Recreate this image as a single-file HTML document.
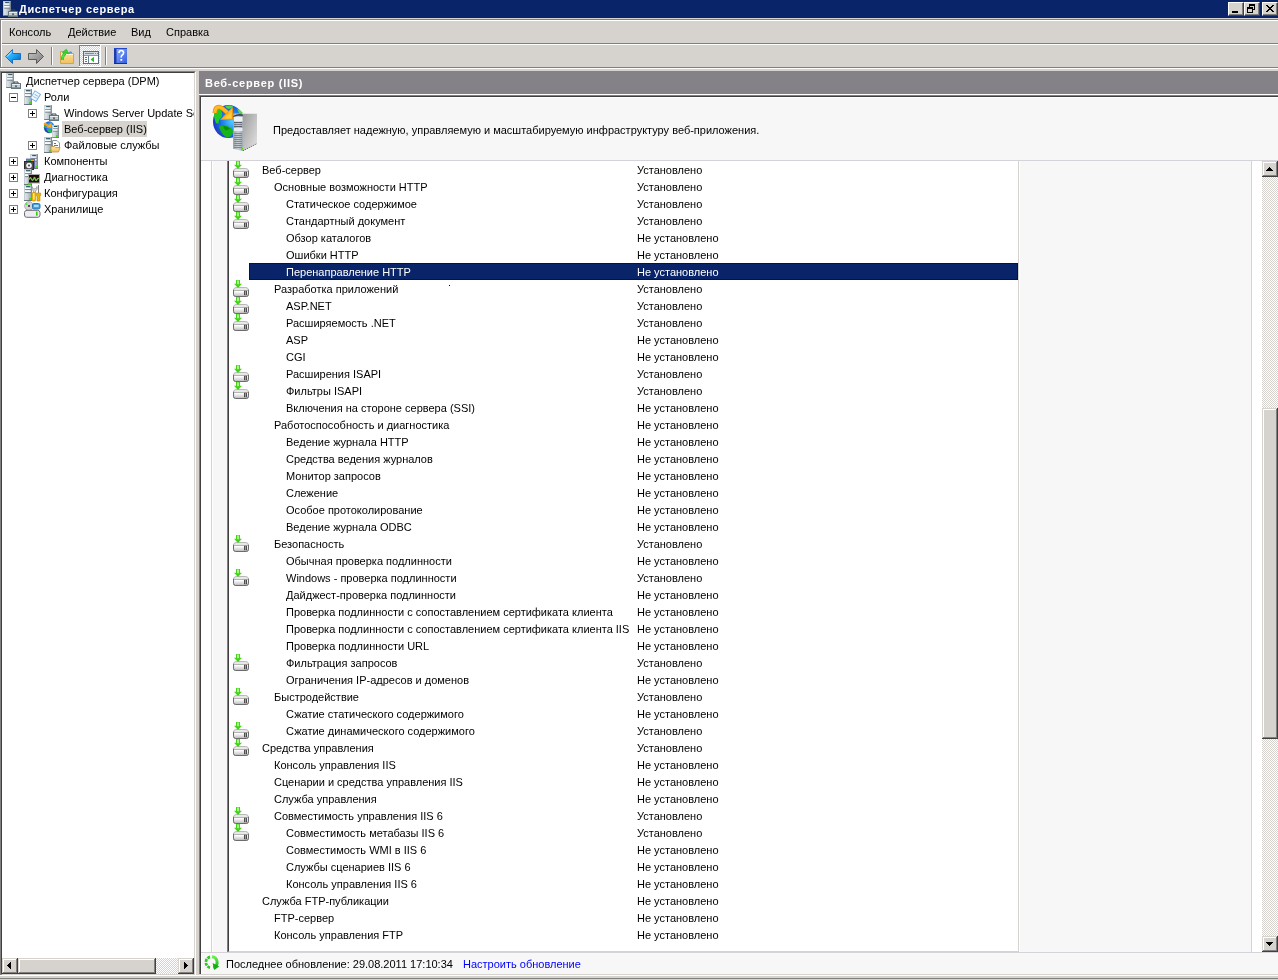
<!DOCTYPE html>
<html><head><meta charset="utf-8"><style>
*{margin:0;padding:0;box-sizing:border-box}
html,body{width:1278px;height:980px;overflow:hidden;background:#D6D3CE;font-family:"Liberation Sans",sans-serif;font-size:11px;color:#000}
.a{position:absolute}
.t{position:absolute;white-space:nowrap;line-height:13px;height:13px;will-change:transform}
.b{font-weight:bold}
svg.a{overflow:visible}
.ce{shape-rendering:crispEdges}
</style></head><body>
<svg width="0" height="0" style="position:absolute">
<defs>
<linearGradient id="gDrv" x1="0" x2="0" y1="0" y2="1"><stop offset="0" stop-color="#fbfbfb"/><stop offset="0.6" stop-color="#dedede"/><stop offset="1" stop-color="#bdbdbd"/></linearGradient>
<linearGradient id="gArrG" x1="0" x2="1" y1="0" y2="0"><stop offset="0" stop-color="#3fcf1c"/><stop offset="0.45" stop-color="#a6ff86"/><stop offset="1" stop-color="#3fcf1c"/></linearGradient>
<linearGradient id="gTow" x1="0" x2="1" y1="0" y2="0"><stop offset="0" stop-color="#e9eff2"/><stop offset="0.5" stop-color="#c4ced4"/><stop offset="1" stop-color="#8e9aa2"/></linearGradient>
<linearGradient id="gBox" x1="0" x2="0" y1="0" y2="1"><stop offset="0" stop-color="#c8d4da"/><stop offset="1" stop-color="#7d8c94"/></linearGradient>
<linearGradient id="gBack" x1="0" x2="1" y1="0" y2="1"><stop offset="0" stop-color="#6fd0ff"/><stop offset="0.5" stop-color="#1ea6f5"/><stop offset="1" stop-color="#0058b8"/></linearGradient>
<linearGradient id="gFwd" x1="0" x2="1" y1="0" y2="1"><stop offset="0" stop-color="#c8c8c8"/><stop offset="1" stop-color="#7c7c7c"/></linearGradient>
<linearGradient id="gFold" x1="0" x2="0" y1="0" y2="1"><stop offset="0" stop-color="#ffe6a0"/><stop offset="1" stop-color="#f0c060"/></linearGradient>
<linearGradient id="gHelp" x1="0" x2="1" y1="0" y2="1"><stop offset="0" stop-color="#98b4ff"/><stop offset="1" stop-color="#2d5ae0"/></linearGradient>
<radialGradient id="gGlobe" cx="0.6" cy="0.4" r="0.7"><stop offset="0" stop-color="#5fd8ff"/><stop offset="0.55" stop-color="#1e6fe6"/><stop offset="1" stop-color="#0a1e9a"/></radialGradient>
<linearGradient id="gSrvF" x1="0" x2="1" y1="0" y2="0"><stop offset="0" stop-color="#9aa0a6"/><stop offset="0.5" stop-color="#e4e6e8"/><stop offset="1" stop-color="#b0b4b8"/></linearGradient>
<linearGradient id="gSrvS" x1="0" x2="1" y1="0" y2="1"><stop offset="0" stop-color="#f2f2f2"/><stop offset="1" stop-color="#c4c4c4"/></linearGradient>
<linearGradient id="gRef" x1="0" x2="0" y1="0" y2="1"><stop offset="0" stop-color="#6cf050"/><stop offset="1" stop-color="#10b010"/></linearGradient>
<pattern id="chk" width="2" height="2" patternUnits="userSpaceOnUse"><rect width="2" height="2" fill="#D6D3CE"/><rect width="1" height="1" fill="#fff"/><rect x="1" y="1" width="1" height="1" fill="#fff"/></pattern>
<symbol id="drv" viewBox="0 0 16 17">
<path d="M0.5 10 Q0.9 7.5 3.2 7.5 H12.8 Q15.1 7.5 15.5 10 V14.3 Q15.5 16.5 13.3 16.5 H2.7 Q0.5 16.5 0.5 14.3 Z" fill="#e8e8e8" stroke="#b8b8b8"/>
<rect x="1" y="11" width="14" height="5" fill="url(#gDrv)"/>
<path d="M0.5 9.8 V14.3 Q0.5 16.5 2.7 16.5 H13.3 Q15.5 16.5 15.5 14.3 V9.8" fill="none" stroke="#6c6c6c"/>
<rect x="1" y="10" width="14" height="0.8" fill="#a8a8a8"/>
<rect x="2" y="11" width="8.5" height="1.2" fill="#ffffff"/>
<rect x="11" y="10.8" width="3" height="4.4" fill="#4c4c4c"/>
<rect x="12" y="11.2" width="1" height="3.6" fill="#44f00c"/>
<path d="M3 0 H7 V3.8 H9 L5 7.9 L1 3.8 H3 Z" fill="#45d21a"/>
<rect x="4.1" y="0.4" width="1.8" height="3.8" fill="#b0ff90"/>
</symbol>
<symbol id="tow" viewBox="0 0 8 16">
<rect x="0" y="0" width="8" height="16" fill="url(#gTow)"/>
<rect x="0" y="0" width="8" height="1" fill="#b8c2c8"/><rect x="0" y="0" width="1" height="16" fill="#c4ccd0"/><rect x="7" y="0" width="1" height="16" fill="#7e8a92"/>
<rect x="2" y="1.2" width="4" height="1.3" fill="#1b4d5a"/>
<rect x="1" y="2.5" width="5.6" height="1.6" fill="#f6fcff"/>
<rect x="1" y="4.2" width="6" height="0.9" fill="#6e7a82"/>
<rect x="1" y="5.2" width="5.6" height="1.8" fill="#f6fcff"/>
<rect x="1" y="7.2" width="6" height="0.9" fill="#6e7a82"/>
<rect x="0" y="15" width="8" height="1" fill="#6a767e"/>
</symbol>
<symbol id="led" viewBox="0 0 2 2"><rect width="2" height="2" fill="#3fe018"/></symbol>
<symbol id="tbox" viewBox="0 0 10 8">
<path d="M3 2.5 V1 H7 V2.5" fill="none" stroke="#3a4448" stroke-width="1"/>
<rect x="0.5" y="2.5" width="9" height="5" fill="url(#gBox)" stroke="#66747c"/>
<rect x="1" y="3" width="8" height="1.2" fill="#e8f0f4"/>
<rect x="4.5" y="4.2" width="1" height="2" fill="#2c3438"/>
<rect x="1" y="5" width="3" height="1" fill="#c8d4d8"/>
<rect x="6" y="5" width="3" height="1" fill="#c8d4d8"/>
</symbol>
<symbol id="smgr" viewBox="0 0 16 16">
<use href="#tow" x="0" y="0" width="8" height="15"/>
<use href="#tbox" x="5" y="8" width="10" height="8"/>
</symbol>
</defs></svg>

<div class="a" style="left:0;top:0;width:1278px;height:18px;background:#0A246A"></div>
<svg class="a" style="left:3px;top:1px" width="16" height="16"><use href="#smgr" width="16" height="16"/></svg>
<div class="t b" style="left:19px;top:3px;color:#fff;letter-spacing:0.6px">Диспетчер сервера</div>
<div class="a" style="left:1228px;top:2px;width:16px;height:14px;background:#D6D3CE;border-top:1px solid #fff;border-left:1px solid #fff;border-right:1px solid #404040;border-bottom:1px solid #404040;box-shadow:inset -1px -1px 0 #808080"></div>
<div class="a" style="left:1244px;top:2px;width:16px;height:14px;background:#D6D3CE;border-top:1px solid #fff;border-left:1px solid #fff;border-right:1px solid #404040;border-bottom:1px solid #404040;box-shadow:inset -1px -1px 0 #808080"></div>
<div class="a" style="left:1262px;top:2px;width:16px;height:14px;background:#D6D3CE;border-top:1px solid #fff;border-left:1px solid #fff;border-right:1px solid #404040;border-bottom:1px solid #404040;box-shadow:inset -1px -1px 0 #808080"></div>
<svg class="a ce" style="left:1228px;top:0" width="50" height="18"><rect x="4" y="11" width="6" height="2" fill="#000"/><rect x="21" y="4" width="6" height="2" fill="#000"/><rect x="26" y="6" width="1" height="4" fill="#000"/><rect x="24" y="9" width="2" height="1" fill="#000"/><rect x="21" y="6" width="1" height="1" fill="#000"/><rect x="19" y="7" width="6" height="2" fill="#000"/><rect x="19" y="9" width="1" height="4" fill="#000"/><rect x="24" y="9" width="1" height="4" fill="#000"/><rect x="19" y="12" width="6" height="1" fill="#000"/></svg>
<svg class="a ce" style="left:1262px;top:2px" width="16" height="14"><rect x="4" y="3" width="2" height="1" fill="#000"/><rect x="10" y="3" width="2" height="1" fill="#000"/><rect x="5" y="4" width="2" height="1" fill="#000"/><rect x="9" y="4" width="2" height="1" fill="#000"/><rect x="6" y="5" width="2" height="1" fill="#000"/><rect x="8" y="5" width="2" height="1" fill="#000"/><rect x="7" y="6" width="2" height="1" fill="#000"/><rect x="7" y="6" width="2" height="1" fill="#000"/><rect x="8" y="7" width="2" height="1" fill="#000"/><rect x="6" y="7" width="2" height="1" fill="#000"/><rect x="9" y="8" width="2" height="1" fill="#000"/><rect x="5" y="8" width="2" height="1" fill="#000"/><rect x="10" y="9" width="2" height="1" fill="#000"/><rect x="4" y="9" width="2" height="1" fill="#000"/></svg>
<div class="a" style="left:0;top:19px;width:1278px;height:1px;background:#808080"></div>
<div class="a" style="left:1px;top:20px;width:1277px;height:1px;background:#fff"></div>
<div class="a" style="left:0;top:19px;width:1px;height:49px;background:#808080"></div>
<div class="a" style="left:1px;top:20px;width:1px;height:47px;background:#fff"></div>
<div class="t" style="left:9px;top:26px">Консоль</div>
<div class="t" style="left:68px;top:26px">Действие</div>
<div class="t" style="left:131px;top:26px">Вид</div>
<div class="t" style="left:166px;top:26px">Справка</div>
<div class="a" style="left:2px;top:43px;width:1276px;height:1px;background:#808080"></div>
<div class="a" style="left:2px;top:44px;width:1276px;height:1px;background:#fff"></div>
<div class="a" style="left:0;top:67px;width:1278px;height:1px;background:#808080"></div>
<div class="a" style="left:0;top:68px;width:1278px;height:1px;background:#fff"></div>
<svg class="a" style="left:0;top:44px" width="140" height="24"><path d="M5.5 12.5 L12.5 5.5 V9.5 H20.5 V15.5 H12.5 V19.5 Z" fill="url(#gBack)" stroke="#1470c8" stroke-width="1" stroke-linejoin="miter"/><path d="M7 12.5 L12 7.5" stroke="#b8ecff" stroke-width="1"/><path d="M43.5 12.5 L36.5 5.5 V9.5 H28.5 V15.5 H36.5 V19.5 Z" fill="url(#gFwd)" stroke="#5a5a5a" stroke-width="1"/><rect x="51" y="3" width="1" height="18" fill="#808080"/><rect x="52" y="3" width="1" height="18" fill="#fff"/><path d="M60.5 19.5 V7.5 H65.5 L66.5 9.5 H73.5 V19.5 Z" fill="url(#gFold)" stroke="#d2a64e"/><rect x="61" y="10" width="12" height="1" fill="#fff4cc"/><path d="M62.3 15.8 Q62.6 11.5 65.2 9.2" fill="none" stroke="#1fa81f" stroke-width="2.8"/><path d="M62.3 15.8 Q62.6 11.5 65.2 9.2" fill="none" stroke="#4ee640" stroke-width="1.6"/><path d="M62.4 8.6 L66.3 5.2 L68.9 9.6 Z" fill="#3cd630" stroke="#1fa81f" stroke-width="0.6"/><ellipse cx="70.5" cy="8.4" rx="1.5" ry="0.9" fill="#4a8ee8"/><rect x="79" y="1" width="22" height="22" fill="url(#chk)"/><rect x="79" y="1" width="22" height="1" fill="#808080"/><rect x="79" y="1" width="1" height="22" fill="#808080"/><rect x="79" y="22" width="22" height="1" fill="#fff"/><rect x="100" y="1" width="1" height="22" fill="#fff"/><g class="ce"><rect x="83" y="7" width="16" height="13" fill="#5c6c80"/><rect x="84" y="8" width="14" height="11" fill="#fff"/><rect x="84" y="8" width="14" height="3" fill="#d2dae2"/><rect x="85" y="9" width="9" height="1" fill="#7a8a9c"/><rect x="95" y="9" width="1" height="1" fill="#7a8a9c"/><rect x="97" y="9" width="1" height="1" fill="#7a8a9c"/><rect x="84" y="11" width="14" height="1" fill="#8a98a8"/><rect x="88" y="12" width="1" height="7" fill="#6c7c8c"/><rect x="85" y="13" width="2" height="1" fill="#3a7ad0"/><rect x="85" y="15" width="2" height="1" fill="#3a7ad0"/><rect x="85" y="17" width="2" height="1" fill="#3a7ad0"/></g><path d="M90.6 15.5 L94 12.8 V18.2 Z" fill="#2eb82e"/><rect x="105" y="3" width="1" height="18" fill="#808080"/><rect x="106" y="3" width="1" height="18" fill="#fff"/><rect x="114" y="4" width="13" height="16" fill="url(#gHelp)"/><rect x="114" y="4" width="2.5" height="16" fill="#1a3cb0"/><rect x="114" y="4" width="13" height="1" fill="#2048c8"/><rect x="114" y="19" width="13" height="1" fill="#1a2c90"/><path d="M119 9 Q119 6.5 121.3 6.5 Q123.6 6.5 123.6 8.8 Q123.6 10.2 122 11.2 Q121.2 11.8 121.2 13.5" fill="none" stroke="#fff" stroke-width="1.6"/><rect x="120.4" y="15" width="1.8" height="1.8" fill="#fff"/></svg>
<div class="a" style="left:0;top:71px;width:196px;height:905px;background:#fff;border-top:1px solid #808080;border-left:1px solid #808080;border-right:1px solid #fff;border-bottom:1px solid #fff;"><div style="position:absolute;left:0;top:0;right:0;bottom:0;border-top:1px solid #404040;border-left:1px solid #404040;border-right:1px solid #D6D3CE;border-bottom:1px solid #D6D3CE"></div></div>
<div class="a" style="left:2px;top:73px;width:192px;height:884px;overflow:hidden">
<div class="t" style="left:24px;top:2px">Диспетчер сервера (DPM)</div>
<div class="t" style="left:42px;top:18px">Роли</div>
<div class="a" style="left:7px;top:20px;width:9px;height:9px;border:1px solid #808080;background:#fff"></div>
<div class="a" style="left:9px;top:24px;width:5px;height:1px;background:#000"></div>
<div class="t" style="left:62px;top:34px">Windows Server Update Services</div>
<div class="a" style="left:26px;top:36px;width:9px;height:9px;border:1px solid #808080;background:#fff"></div>
<div class="a" style="left:28px;top:40px;width:5px;height:1px;background:#000"></div>
<div class="a" style="left:30px;top:38px;width:1px;height:5px;background:#000"></div>
<div class="a" style="left:60px;top:48px;width:85px;height:16px;background:#D6D3CE"></div>
<div class="t" style="left:62px;top:50px">Веб-сервер (IIS)</div>
<div class="t" style="left:62px;top:66px">Файловые службы</div>
<div class="a" style="left:26px;top:68px;width:9px;height:9px;border:1px solid #808080;background:#fff"></div>
<div class="a" style="left:28px;top:72px;width:5px;height:1px;background:#000"></div>
<div class="a" style="left:30px;top:70px;width:1px;height:5px;background:#000"></div>
<div class="t" style="left:42px;top:82px">Компоненты</div>
<div class="a" style="left:7px;top:84px;width:9px;height:9px;border:1px solid #808080;background:#fff"></div>
<div class="a" style="left:9px;top:88px;width:5px;height:1px;background:#000"></div>
<div class="a" style="left:11px;top:86px;width:1px;height:5px;background:#000"></div>
<div class="t" style="left:42px;top:98px">Диагностика</div>
<div class="a" style="left:7px;top:100px;width:9px;height:9px;border:1px solid #808080;background:#fff"></div>
<div class="a" style="left:9px;top:104px;width:5px;height:1px;background:#000"></div>
<div class="a" style="left:11px;top:102px;width:1px;height:5px;background:#000"></div>
<div class="t" style="left:42px;top:114px">Конфигурация</div>
<div class="a" style="left:7px;top:116px;width:9px;height:9px;border:1px solid #808080;background:#fff"></div>
<div class="a" style="left:9px;top:120px;width:5px;height:1px;background:#000"></div>
<div class="a" style="left:11px;top:118px;width:1px;height:5px;background:#000"></div>
<div class="t" style="left:42px;top:130px">Хранилище</div>
<div class="a" style="left:7px;top:132px;width:9px;height:9px;border:1px solid #808080;background:#fff"></div>
<div class="a" style="left:9px;top:136px;width:5px;height:1px;background:#000"></div>
<div class="a" style="left:11px;top:134px;width:1px;height:5px;background:#000"></div>
<svg class="a" style="left:4px;top:0px" width="20" height="17"><use href="#smgr" width="16" height="16"/></svg>
<svg class="a" style="left:22px;top:16px" width="20" height="17"><use href="#tow" width="8" height="16"/><rect x="5" y="13" width="2" height="2" fill="#3fe018"/><g transform="translate(0.5 1.8) rotate(32 11.5 6)"><rect x="7.5" y="1.5" width="6.5" height="8.5" fill="#f4faff" stroke="#7ab4e8"/><rect x="9" y="4" width="4" height="1" fill="#9ab8e0"/><rect x="9" y="6.5" width="4" height="1" fill="#9ab8e0"/></g></svg>
<svg class="a" style="left:42px;top:32px" width="20" height="17"><use href="#smgr" width="16" height="16"/></svg>
<svg class="a" style="left:41px;top:48px" width="20" height="17"><ellipse cx="6.2" cy="6.3" rx="5.3" ry="6" fill="url(#gGlobe)"/><path d="M3.5 8 Q6 7.5 9 10 L7.5 12 Q4.5 11 3.5 8Z" fill="#22c83a"/><path d="M1.2 4 Q1 6 2 7.5 L3 6 Z" fill="#30d040"/><path d="M1.2 2.2 L5.5 5.2" stroke="#f8a010" stroke-width="2.6"/><path d="M8.3 1.8 V6.6 H3.5 Z" fill="#ffb020" stroke="#f09000" stroke-width="0.5"/><use href="#tow" x="9" y="4" width="7" height="13"/><rect x="13" y="14" width="2" height="2" fill="#3fe018"/></svg>
<svg class="a" style="left:42px;top:64px" width="20" height="17"><use href="#tow" width="8" height="16"/><rect x="5" y="13" width="2" height="2" fill="#3fe018"/><path d="M8.5 3.5 H13 L15.5 6 V11.5 H8.5 Z" fill="#fff" stroke="#8a949a"/><rect x="10" y="6" width="2" height="1" fill="#3a78d0"/><rect x="10" y="8" width="4" height="1" fill="#3a78d0"/><path d="M7 9.5 H10.5 L11.5 10.5 H16 L14.5 15 H7 Z" fill="url(#gFold)" stroke="#c09040" stroke-width="0.8"/></svg>
<svg class="a" style="left:22px;top:80px" width="20" height="17"><use href="#tow" x="6" y="1" width="8" height="15"/><rect x="11" y="13" width="2" height="2" fill="#3fe018"/><rect x="2.5" y="6" width="8" height="9" fill="#7c80c0" stroke="#5a5ea8" stroke-width="0.8"/><rect x="4" y="7" width="3" height="1" fill="#3a9a50"/><rect x="7" y="7" width="3" height="1" fill="#f0b020"/><rect x="0.5" y="8.5" width="9" height="8" fill="#505050" stroke="#2a2a2a"/><circle cx="5" cy="12.5" r="2.8" fill="#f0f0ff"/><circle cx="5" cy="12.5" r="0.9" fill="#303030"/></svg>
<svg class="a" style="left:22px;top:96px" width="20" height="17"><use href="#tow" width="8" height="16"/><rect x="4.5" y="5.5" width="11" height="8.5" fill="#1c0c0c" stroke="#a8acb0"/><path d="M5.2 10.5 Q6.3 7 7.4 10 Q8.6 12.8 9.8 9.5 Q10.6 6.8 11.4 10.6 Q12.4 12.5 13.4 10 Q14.2 8.8 15 10" fill="none" stroke="#78c848" stroke-width="1.3"/><rect x="4" y="14.2" width="3" height="1.6" fill="#3fe018"/></svg>
<svg class="a" style="left:22px;top:112px" width="20" height="17"><use href="#tow" width="8" height="16"/><rect x="5" y="13" width="2" height="2" fill="#3fe018"/><path d="M8 1.5 Q7 4.5 9.5 6 L9.5 7.5 L11.5 7.5 L11.5 6 Q14 4.5 13 1.5 L11.8 3.8 L9.2 3.8 Z" fill="#d8d8d8" stroke="#909090" stroke-width="0.7"/><rect x="8" y="7.5" width="3.6" height="8.5" rx="1" fill="#f2c000" stroke="#c89000" stroke-width="0.7"/><rect x="9.2" y="8.5" width="1.2" height="6" fill="#fff6a0"/><rect x="14" y="0" width="1" height="8" fill="#808080"/><path d="M12.3 8 H16.7 V10.5 H16 V16 H13 V10.5 H12.3 Z" fill="#f0b400" stroke="#c08800" stroke-width="0.6"/></svg>
<svg class="a" style="left:22px;top:128px" width="20" height="17"><circle cx="5" cy="5" r="4.4" fill="#d4d4d8" stroke="#9a9aa0" stroke-width="0.7"/><circle cx="5" cy="5" r="1.1" fill="#303030"/><path d="M1.2 4 Q1.5 2 3 1.3 L3.5 4 Z" fill="#60e040"/><rect x="8.5" y="2.5" width="7.5" height="5.5" rx="1.5" fill="#48a4e0" stroke="#2a74b4"/><rect x="10" y="4" width="4.5" height="2" fill="#a8dcf8"/><path d="M0.5 11.5 Q0.8 9.3 3 9.3 H13.5 Q15.7 9.3 16 11.5 V14 Q16 16.3 13.8 16.3 H2.7 Q0.5 16.3 0.5 14 Z" fill="#ececf2" stroke="#6c6c70"/><rect x="12" y="10.5" width="1.6" height="4.2" fill="#30d010"/></svg>
</div>
<svg class="a ce" style="left:2px;top:958px" width="192" height="16"><rect width="192" height="16" fill="url(#chk)"/><rect x="0" y="0" width="16" height="16" fill="#404040"/><rect x="0" y="0" width="15" height="15" fill="#D6D3CE"/><rect x="1" y="1" width="14" height="14" fill="#808080"/><rect x="1" y="1" width="13" height="13" fill="#fff"/><rect x="2" y="2" width="12" height="12" fill="#D6D3CE"/><rect x="5" y="7" width="1" height="1" fill="#000"/><rect x="6" y="6" width="1" height="3" fill="#000"/><rect x="7" y="5" width="1" height="5" fill="#000"/><rect x="8" y="4" width="1" height="7" fill="#000"/><rect x="16" y="0" width="138" height="16" fill="#404040"/><rect x="16" y="0" width="137" height="15" fill="#D6D3CE"/><rect x="17" y="1" width="136" height="14" fill="#808080"/><rect x="17" y="1" width="135" height="13" fill="#fff"/><rect x="18" y="2" width="134" height="12" fill="#D6D3CE"/><rect x="176" y="0" width="16" height="16" fill="#404040"/><rect x="176" y="0" width="15" height="15" fill="#D6D3CE"/><rect x="177" y="1" width="14" height="14" fill="#808080"/><rect x="177" y="1" width="13" height="13" fill="#fff"/><rect x="178" y="2" width="12" height="12" fill="#D6D3CE"/><rect x="182" y="4" width="1" height="7" fill="#000"/><rect x="183" y="5" width="1" height="5" fill="#000"/><rect x="184" y="6" width="1" height="3" fill="#000"/><rect x="185" y="7" width="1" height="1" fill="#000"/></svg>
<div class="a" style="left:199px;top:71px;width:1079px;height:23px;background:#848286"></div>
<div class="t b" style="left:205px;top:77px;color:#fff;letter-spacing:0.72px">Веб-сервер (IIS)</div>
<div class="a" style="left:199px;top:94px;width:1079px;height:1px;background:#fff"></div>
<div class="a" style="left:199px;top:95px;width:1079px;height:880px;background:#F7F7F7;border-top:1px solid #808080;border-left:1px solid #808080"><div style="position:absolute;left:0;top:0;right:0;bottom:0;border-top:1px solid #404040;border-left:1px solid #404040"></div></div>
<div class="a" style="left:201px;top:97px;width:1077px;height:1px;background:#fff"></div>
<div class="a" style="left:201px;top:97px;width:1px;height:63px;background:#fff"></div>
<svg class="a" style="left:206px;top:100px" width="56" height="56"><defs><linearGradient id="gSide" x1="0" y1="0" x2="1" y2="1"><stop offset="0" stop-color="#9c9c9c"/><stop offset="0.55" stop-color="#c4c4c4"/><stop offset="1" stop-color="#e4e4e4"/></linearGradient><linearGradient id="gFront" x1="0" y1="0" x2="1" y2="0"><stop offset="0" stop-color="#9aa2aa"/><stop offset="0.5" stop-color="#c8d0d6"/><stop offset="1" stop-color="#a0a8b0"/></linearGradient><radialGradient id="gGl2" cx="0.62" cy="0.5" r="0.75"><stop offset="0" stop-color="#4fd0ff"/><stop offset="0.45" stop-color="#1e78e8"/><stop offset="0.85" stop-color="#1a30c0"/><stop offset="1" stop-color="#101c90"/></radialGradient></defs><ellipse cx="22.5" cy="21.5" rx="15.5" ry="16.5" fill="url(#gGl2)"/><path d="M8 10 Q11 8 15 10 Q17 14 15.5 17 Q13 19 12.5 23 Q11 25 9.5 22 Q7.5 17 8 10 Z" fill="#22cc22"/><path d="M13 26.5 Q18 24.5 23 27 Q27 28.5 27 32 Q26 37 21 37.5 Q15.5 35 13 26.5 Z" fill="#18b418"/><path d="M17 25.5 Q21 26 24 28.5 Q22 31 19 30 Z" fill="#0a9010"/><path d="M19 6 Q23 4.8 27 6 Q26 8.5 23 9 Q20 8.5 19 6 Z" fill="#4cd848"/><path d="M31 9 Q35 10 37 13 L33 13 Z" fill="#5ad850"/><path d="M8.8 13 Q9 7 13 7 Q15.5 7 22.5 13.8" fill="none" stroke="#f09000" stroke-width="4.6"/><path d="M8.8 13 Q9 7 13 7 Q15.5 7 22.5 13.8" fill="none" stroke="#ffb828" stroke-width="3"/><path d="M26.5 7.5 L26.5 19.5 L14.8 19.5 Z" fill="#ffb420" stroke="#f09000" stroke-width="0.9" stroke-linejoin="round"/><path d="M18.5 18.5 L25.5 11.5 V18.5 Z" fill="#ffcc40"/><path d="M37 13.8 L51 13.8 L51 43.8 L37 51 Z" fill="url(#gSide)"/><path d="M37 50.8 L51 43.6" stroke="#505050" stroke-width="0.8" stroke-dasharray="1.2 1"/><path d="M27 13.5 H37 V51 L27 48.7 Z" fill="url(#gFront)"/><path d="M27.2 16 Q32 13.2 36.8 14.5 V16 Q32 15 27.2 17 Z" fill="#3a3e44"/><rect x="28" y="17" width="8.5" height="4.5" fill="#eef2f6"/><rect x="28" y="22" width="8" height="1" fill="#5a6068"/><rect x="28" y="24" width="8" height="1" fill="#7a8088"/><rect x="28" y="26" width="8" height="1" fill="#5a6068"/><rect x="28" y="28" width="8.5" height="3" fill="#e8ecf0"/><rect x="28" y="33" width="8" height="1" fill="#80888f"/><rect x="28" y="35" width="8" height="1" fill="#80888f"/><rect x="28" y="37" width="8" height="1" fill="#80888f"/><rect x="28" y="39" width="8" height="1" fill="#80888f"/><rect x="28" y="41" width="8" height="1" fill="#80888f"/><rect x="28" y="43" width="8" height="1" fill="#80888f"/><rect x="28" y="45" width="8" height="1" fill="#80888f"/><rect x="28" y="47" width="8" height="1" fill="#80888f"/><rect x="35" y="48" width="2.2" height="2.2" fill="#58e020"/></svg>
<div class="t" style="left:273px;top:124px">Предоставляет надежную, управляемую и масштабируемую инфраструктуру веб-приложения.</div>
<div class="a" style="left:201px;top:160px;width:1077px;height:1px;background:#D5D3D8"></div>
<div class="a" style="left:201px;top:161px;width:1061px;height:791px;background:#fff;overflow:hidden">
<div class="a" style="left:10px;top:0;width:1px;height:791px;background:#D5D3D8"></div>
<div class="a" style="left:11px;top:0;width:1040px;height:791px;background:#F7F7F7;border-left:1px solid #fff;border-right:1px solid #fff"></div>
<div class="a" style="left:1050px;top:0;width:1px;height:791px;background:#D5D3D8"></div>
<div class="a" style="left:26px;top:-10px;width:793px;height:802px;background:#fff;border-left:1px solid #808080;border-bottom:1px solid #fff;border-right:1px solid #fff"><div style="position:absolute;left:0;top:0;right:0;bottom:0;border-left:1px solid #404040;border-bottom:1px solid #D6D3CE;border-right:1px solid #D6D3CE"></div></div>
<div class="t" style="left:61px;top:3px;color:#000">Веб-сервер</div>
<div class="t" style="left:436px;top:3px;color:#000">Установлено</div>
<svg class="a" style="left:32px;top:0px" width="16" height="17"><use href="#drv" width="16" height="17"/></svg>
<div class="t" style="left:73px;top:20px;color:#000">Основные возможности HTTP</div>
<div class="t" style="left:436px;top:20px;color:#000">Установлено</div>
<svg class="a" style="left:32px;top:17px" width="16" height="17"><use href="#drv" width="16" height="17"/></svg>
<div class="t" style="left:85px;top:37px;color:#000">Статическое содержимое</div>
<div class="t" style="left:436px;top:37px;color:#000">Установлено</div>
<svg class="a" style="left:32px;top:34px" width="16" height="17"><use href="#drv" width="16" height="17"/></svg>
<div class="t" style="left:85px;top:54px;color:#000">Стандартный документ</div>
<div class="t" style="left:436px;top:54px;color:#000">Установлено</div>
<svg class="a" style="left:32px;top:51px" width="16" height="17"><use href="#drv" width="16" height="17"/></svg>
<div class="t" style="left:85px;top:71px;color:#000">Обзор каталогов</div>
<div class="t" style="left:436px;top:71px;color:#000">Не установлено</div>
<div class="t" style="left:85px;top:88px;color:#000">Ошибки HTTP</div>
<div class="t" style="left:436px;top:88px;color:#000">Не установлено</div>
<div class="a" style="left:48px;top:102px;width:769px;height:17px;background:#0A246A;border:1px solid #01105E"></div>
<div class="t" style="left:85px;top:105px;color:#fff">Перенаправление HTTP</div>
<div class="t" style="left:436px;top:105px;color:#fff">Не установлено</div>
<div class="t" style="left:73px;top:122px;color:#000">Разработка приложений</div>
<div class="t" style="left:436px;top:122px;color:#000">Установлено</div>
<svg class="a" style="left:32px;top:119px" width="16" height="17"><use href="#drv" width="16" height="17"/></svg>
<div class="t" style="left:85px;top:139px;color:#000">ASP.NET</div>
<div class="t" style="left:436px;top:139px;color:#000">Установлено</div>
<svg class="a" style="left:32px;top:136px" width="16" height="17"><use href="#drv" width="16" height="17"/></svg>
<div class="t" style="left:85px;top:156px;color:#000">Расширяемость .NET</div>
<div class="t" style="left:436px;top:156px;color:#000">Установлено</div>
<svg class="a" style="left:32px;top:153px" width="16" height="17"><use href="#drv" width="16" height="17"/></svg>
<div class="t" style="left:85px;top:173px;color:#000">ASP</div>
<div class="t" style="left:436px;top:173px;color:#000">Не установлено</div>
<div class="t" style="left:85px;top:190px;color:#000">CGI</div>
<div class="t" style="left:436px;top:190px;color:#000">Не установлено</div>
<div class="t" style="left:85px;top:207px;color:#000">Расширения ISAPI</div>
<div class="t" style="left:436px;top:207px;color:#000">Установлено</div>
<svg class="a" style="left:32px;top:204px" width="16" height="17"><use href="#drv" width="16" height="17"/></svg>
<div class="t" style="left:85px;top:224px;color:#000">Фильтры ISAPI</div>
<div class="t" style="left:436px;top:224px;color:#000">Установлено</div>
<svg class="a" style="left:32px;top:221px" width="16" height="17"><use href="#drv" width="16" height="17"/></svg>
<div class="t" style="left:85px;top:241px;color:#000">Включения на стороне сервера (SSI)</div>
<div class="t" style="left:436px;top:241px;color:#000">Не установлено</div>
<div class="t" style="left:73px;top:258px;color:#000">Работоспособность и диагностика</div>
<div class="t" style="left:436px;top:258px;color:#000">Не установлено</div>
<div class="t" style="left:85px;top:275px;color:#000">Ведение журнала HTTP</div>
<div class="t" style="left:436px;top:275px;color:#000">Не установлено</div>
<div class="t" style="left:85px;top:292px;color:#000">Средства ведения журналов</div>
<div class="t" style="left:436px;top:292px;color:#000">Не установлено</div>
<div class="t" style="left:85px;top:309px;color:#000">Монитор запросов</div>
<div class="t" style="left:436px;top:309px;color:#000">Не установлено</div>
<div class="t" style="left:85px;top:326px;color:#000">Слежение</div>
<div class="t" style="left:436px;top:326px;color:#000">Не установлено</div>
<div class="t" style="left:85px;top:343px;color:#000">Особое протоколирование</div>
<div class="t" style="left:436px;top:343px;color:#000">Не установлено</div>
<div class="t" style="left:85px;top:360px;color:#000">Ведение журнала ODBC</div>
<div class="t" style="left:436px;top:360px;color:#000">Не установлено</div>
<div class="t" style="left:73px;top:377px;color:#000">Безопасность</div>
<div class="t" style="left:436px;top:377px;color:#000">Установлено</div>
<svg class="a" style="left:32px;top:374px" width="16" height="17"><use href="#drv" width="16" height="17"/></svg>
<div class="t" style="left:85px;top:394px;color:#000">Обычная проверка подлинности</div>
<div class="t" style="left:436px;top:394px;color:#000">Не установлено</div>
<div class="t" style="left:85px;top:411px;color:#000">Windows - проверка подлинности</div>
<div class="t" style="left:436px;top:411px;color:#000">Установлено</div>
<svg class="a" style="left:32px;top:408px" width="16" height="17"><use href="#drv" width="16" height="17"/></svg>
<div class="t" style="left:85px;top:428px;color:#000">Дайджест-проверка подлинности</div>
<div class="t" style="left:436px;top:428px;color:#000">Не установлено</div>
<div class="t" style="left:85px;top:445px;color:#000">Проверка подлинности с сопоставлением сертификата клиента</div>
<div class="t" style="left:436px;top:445px;color:#000">Не установлено</div>
<div class="t" style="left:85px;top:462px;color:#000">Проверка подлинности с сопоставлением сертификата клиента IIS</div>
<div class="t" style="left:436px;top:462px;color:#000">Не установлено</div>
<div class="t" style="left:85px;top:479px;color:#000">Проверка подлинности URL</div>
<div class="t" style="left:436px;top:479px;color:#000">Не установлено</div>
<div class="t" style="left:85px;top:496px;color:#000">Фильтрация запросов</div>
<div class="t" style="left:436px;top:496px;color:#000">Установлено</div>
<svg class="a" style="left:32px;top:493px" width="16" height="17"><use href="#drv" width="16" height="17"/></svg>
<div class="t" style="left:85px;top:513px;color:#000">Ограничения IP-адресов и доменов</div>
<div class="t" style="left:436px;top:513px;color:#000">Не установлено</div>
<div class="t" style="left:73px;top:530px;color:#000">Быстродействие</div>
<div class="t" style="left:436px;top:530px;color:#000">Установлено</div>
<svg class="a" style="left:32px;top:527px" width="16" height="17"><use href="#drv" width="16" height="17"/></svg>
<div class="t" style="left:85px;top:547px;color:#000">Сжатие статического содержимого</div>
<div class="t" style="left:436px;top:547px;color:#000">Не установлено</div>
<div class="t" style="left:85px;top:564px;color:#000">Сжатие динамического содержимого</div>
<div class="t" style="left:436px;top:564px;color:#000">Установлено</div>
<svg class="a" style="left:32px;top:561px" width="16" height="17"><use href="#drv" width="16" height="17"/></svg>
<div class="t" style="left:61px;top:581px;color:#000">Средства управления</div>
<div class="t" style="left:436px;top:581px;color:#000">Установлено</div>
<svg class="a" style="left:32px;top:578px" width="16" height="17"><use href="#drv" width="16" height="17"/></svg>
<div class="t" style="left:73px;top:598px;color:#000">Консоль управления IIS</div>
<div class="t" style="left:436px;top:598px;color:#000">Не установлено</div>
<div class="t" style="left:73px;top:615px;color:#000">Сценарии и средства управления IIS</div>
<div class="t" style="left:436px;top:615px;color:#000">Не установлено</div>
<div class="t" style="left:73px;top:632px;color:#000">Служба управления</div>
<div class="t" style="left:436px;top:632px;color:#000">Не установлено</div>
<div class="t" style="left:73px;top:649px;color:#000">Совместимость управления IIS 6</div>
<div class="t" style="left:436px;top:649px;color:#000">Установлено</div>
<svg class="a" style="left:32px;top:646px" width="16" height="17"><use href="#drv" width="16" height="17"/></svg>
<div class="t" style="left:85px;top:666px;color:#000">Совместимость метабазы IIS 6</div>
<div class="t" style="left:436px;top:666px;color:#000">Установлено</div>
<svg class="a" style="left:32px;top:663px" width="16" height="17"><use href="#drv" width="16" height="17"/></svg>
<div class="t" style="left:85px;top:683px;color:#000">Совместимость WMI в IIS 6</div>
<div class="t" style="left:436px;top:683px;color:#000">Не установлено</div>
<div class="t" style="left:85px;top:700px;color:#000">Службы сценариев IIS 6</div>
<div class="t" style="left:436px;top:700px;color:#000">Не установлено</div>
<div class="t" style="left:85px;top:717px;color:#000">Консоль управления IIS 6</div>
<div class="t" style="left:436px;top:717px;color:#000">Не установлено</div>
<div class="t" style="left:61px;top:734px;color:#000">Служба FTP-публикации</div>
<div class="t" style="left:436px;top:734px;color:#000">Не установлено</div>
<div class="t" style="left:73px;top:751px;color:#000">FTP-сервер</div>
<div class="t" style="left:436px;top:751px;color:#000">Не установлено</div>
<div class="t" style="left:73px;top:768px;color:#000">Консоль управления FTP</div>
<div class="t" style="left:436px;top:768px;color:#000">Не установлено</div>
<div class="a" style="left:248px;top:124px;width:1px;height:1px;background:#000"></div>
</div>
<svg class="a ce" style="left:1262px;top:161px" width="16" height="791"><rect width="16" height="791" fill="url(#chk)"/><rect x="0" y="0" width="16" height="16" fill="#404040"/><rect x="0" y="0" width="15" height="15" fill="#D6D3CE"/><rect x="1" y="1" width="14" height="14" fill="#808080"/><rect x="1" y="1" width="13" height="13" fill="#fff"/><rect x="2" y="2" width="12" height="12" fill="#D6D3CE"/><rect x="7" y="6" width="1" height="1" fill="#000"/><rect x="6" y="7" width="3" height="1" fill="#000"/><rect x="5" y="8" width="5" height="1" fill="#000"/><rect x="4" y="9" width="7" height="1" fill="#000"/><rect x="0" y="247" width="16" height="331" fill="#404040"/><rect x="0" y="247" width="15" height="330" fill="#D6D3CE"/><rect x="1" y="248" width="14" height="329" fill="#808080"/><rect x="1" y="248" width="13" height="328" fill="#fff"/><rect x="2" y="249" width="12" height="327" fill="#D6D3CE"/><rect x="0" y="775" width="16" height="16" fill="#404040"/><rect x="0" y="775" width="15" height="15" fill="#D6D3CE"/><rect x="1" y="776" width="14" height="14" fill="#808080"/><rect x="1" y="776" width="13" height="13" fill="#fff"/><rect x="2" y="777" width="12" height="12" fill="#D6D3CE"/><rect x="4" y="781" width="7" height="1" fill="#000"/><rect x="5" y="782" width="5" height="1" fill="#000"/><rect x="6" y="783" width="3" height="1" fill="#000"/><rect x="7" y="784" width="1" height="1" fill="#000"/></svg>
<div class="a" style="left:201px;top:952px;width:1077px;height:1px;background:#D5D3D8"></div>
<div class="a" style="left:201px;top:953px;width:1px;height:21px;background:#fff"></div>
<svg class="a" style="left:200px;top:952px" width="24" height="22"><path d="M10.05 15.71 A5.6 5.6 0 0 1 7.54 14.26" fill="none" stroke="#2ec81e" stroke-width="2.7"/><path d="M6.91 13.51 A5.6 5.6 0 0 1 5.92 10.79" fill="none" stroke="#2ec81e" stroke-width="2.7"/><path d="M5.92 9.81 A5.6 5.6 0 0 1 6.91 7.09" fill="none" stroke="#2ec81e" stroke-width="2.7"/><path d="M7.54 6.34 A5.6 5.6 0 0 1 10.05 4.89" fill="none" stroke="#2ec81e" stroke-width="2.7"/><path d="M11.99 4.72 A5.6 5.6 0 0 1 13.42 15.56" fill="none" stroke="url(#gRef)" stroke-width="3.0"/><path d="M12.6 11 L19.2 14.6 L14.2 18 Z" fill="#12ae12"/></svg>
<div class="t" style="left:226px;top:958px">Последнее обновление: 29.08.2011 17:10:34</div>
<div class="t" style="left:463px;top:958px;color:#0000FF">Настроить обновление</div>
<div class="a" style="left:199px;top:974px;width:1079px;height:1px;background:#D6D3CE"></div>
<div class="a" style="left:0;top:975px;width:1278px;height:1px;background:#fff"></div>
<div class="a" style="left:0;top:978px;width:1278px;height:1px;background:#808080"></div>
</body></html>
